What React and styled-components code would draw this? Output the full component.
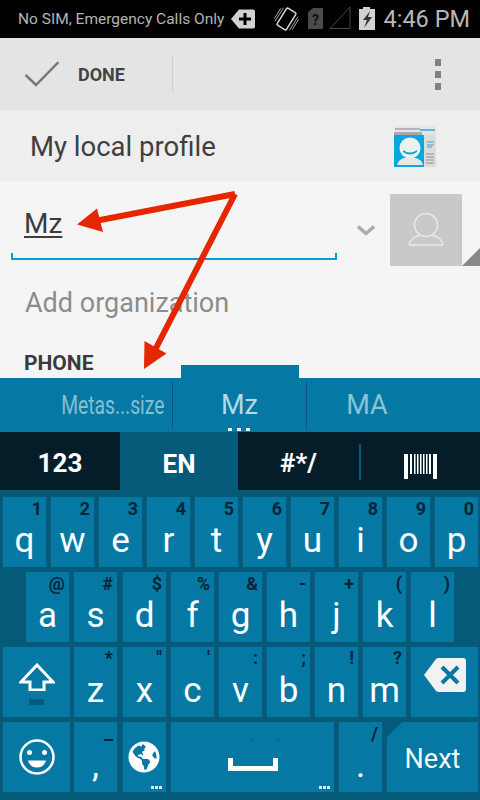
import React from "react";
import styled, {createGlobalStyle} from "styled-components";
import {FaGlobeAmericas} from "react-icons/fa";

const GlobalStyle = createGlobalStyle`
  html, body {
    margin: 0;
    padding: 0;
    background: #000;
  }

  body {
    font-family: Roboto, "Liberation Sans", sans-serif;
  }
`;

const Screen = styled.div`
  position: relative;
  width: 480px;
  height: 800px;
  overflow: hidden;
  display: flex;
  flex-direction: column;
`;

const StatusBar = styled.div`
  height: 38px;
  background: #000;
  color: #b4b4b4;
  display: flex;
  align-items: center;
  padding: 0 10px 0 18px;
`;

const StatusText = styled.span`
  font-size: 15.5px;
  width: 211px;
  flex: none;
  white-space: nowrap;
`;

const StatusIcons = styled.div`
  display: flex;
  align-items: center;
  flex: none;
  height: 38px;
`;

const Clock = styled.span`
  margin-left: auto;
  font-size: 23.5px;
  color: #b8b8b8;
  white-space: nowrap;
`;

const ActionBar = styled.div`
  height: 72px;
  background: #e4e4e4;
  display: flex;
  align-items: center;
  padding-left: 25px;
`;

const DoneLabel = styled.span`
  margin-left: 19px;
  font-size: 18px;
  font-weight: 700;
  color: #444;
`;

const BarDivider = styled.div`
  width: 1px;
  height: 36px;
  margin-left: 47px;
  background: #cfcfcf;
`;

const OverflowMenu = styled.div`
  margin-left: auto;
  margin-right: 39px;
  display: flex;
  flex-direction: column;
  gap: 5px;

  i {
    display: block;
    width: 6px;
    height: 7px;
    background: #808080;
  }
`;

const ProfileHeader = styled.div`
  height: 72px;
  background: #eeeeee;
  display: flex;
  align-items: center;
  justify-content: space-between;
  padding: 0 43px 0 30px;
  font-size: 27.5px;
  color: #3f3f3f;
`;

const Form = styled.div`
  height: 196px;
  background: #f5f5f5;
  overflow: hidden;
`;

const NameRow = styled.div`
  display: flex;
  padding: 12px 0 0 11px;
  height: 72px;
`;

const NameField = styled.div`
  width: 326px;
  height: 66px;
  box-sizing: border-box;
  border: 2px solid #0f9bcf;
  border-top: 0;
  border-image: linear-gradient(to bottom, transparent 0 60px, #0f9bcf 60px) 1;
  padding: 13px 0 0 11px;
  font-size: 28px;
  color: #3c3c3c;

  u {
    text-underline-offset: 3px;
    text-decoration-thickness: 2px;
  }
`;

const Chevron = styled.svg`
  margin: 31px 0 0 20px;
`;

const Avatar = styled.div`
  width: 72px;
  height: 72px;
  margin-left: 15px;
  background: #c9c9c9;
  display: flex;
  align-items: center;
  justify-content: center;
`;

const CornerMark = styled.div`
  width: 18px;
  height: 18px;
  margin-top: 54px;
  background: #888;
  clip-path: polygon(100% 0, 100% 100%, 0 100%);
`;

const OrgField = styled.div`
  padding: 22px 0 0 25px;
  font-size: 27px;
  line-height: 30px;
  color: #8c8c8c;
`;

const SectionTitle = styled.div`
  padding: 33px 0 0 24px;
  font-size: 21px;
  line-height: 24px;
  font-weight: 700;
  color: #3a3a3a;
`;

const CandidateBar = styled.div`
  position: relative;
  height: 54px;
  background: #0578a3;
  display: flex;
  align-items: center;

  &::before {
    content: "";
    position: absolute;
    left: 181px;
    top: -13px;
    width: 118px;
    height: 13px;
    background: #0578a3;
  }
`;

const Candidate = styled.div`
  width: ${(p) => p.$width}px;
  height: 47px;
  box-sizing: border-box;
  display: flex;
  align-items: center;
  justify-content: ${(p) => p.$align || "center"};
  font-size: 27px;
  color: ${(p) => (p.$selected ? "#b5d9e6" : "#8cc3d7")};
  border-right: ${(p) => (p.$split ? "1px solid #045a78" : "0")};
  position: relative;
`;

const SquishedText = styled.span`
  font-size: 26px;
  display: inline-block;
  transform: scaleX(0.74);
  transform-origin: right center;
  margin-right: 8px;
  white-space: nowrap;
  color: #85bfd4;
`;

const MoreDots = styled.div`
  position: absolute;
  bottom: -2px;
  left: ${(p) => p.$left}px;
  display: flex;
  gap: 5px;

  i {
    display: block;
    width: 4px;
    height: 3px;
    background: #e6f2f6;
  }
`;

const ModeRow = styled.div`
  height: 60px;
  background: #051d29;
  display: flex;
  align-items: stretch;
  margin-bottom: -2px;
`;

const ModeTab = styled.div`
  width: ${(p) => p.$width}px;
  height: ${(p) => (p.$active ? 60 : 58)}px;
  background: ${(p) => (p.$active ? "#045a78" : "transparent")};
  color: #fff;
  font-size: 26px;
  font-weight: 700;
  display: flex;
  align-items: center;
  justify-content: center;
  padding-top: 3px;
  box-sizing: border-box;
`;

const ModeDivider = styled.div`
  width: 2px;
  height: 36px;
  margin-top: 12px;
  background: #045a78;
`;

const BarcodeWrap = styled.div`
  flex: 1;
  display: flex;
  align-items: flex-start;
  justify-content: center;
  padding-top: 22px;
`;

const Keyboard = styled.div`
  flex: 1;
  background: #045a78;
  padding: 7px 2px 8px 3px;
  display: flex;
  flex-direction: column;
  gap: 5px;
`;

const KeyRow = styled.div`
  display: flex;
  gap: 5px;
  padding-left: ${(p) => p.$indent || 0}px;
`;

const Key = styled.div`
  position: relative;
  flex: none;
  width: ${(p) => p.$width || 43}px;
  height: 70px;
  margin-left: ${(p) => p.$nudge || 0}px;
  background: #0578a3;
  display: flex;
  align-items: center;
  justify-content: center;
  clip-path: ${(p) => (p.$notch ? "polygon(15px 0, 100% 0, 100% 100%, 0 100%, 0 15px)" : "none")};
`;

const Letter = styled.span`
  color: #fff;
  font-size: 35px;
  line-height: 40px;
  margin-top: 17px;
`;

const Hint = styled.span`
  position: absolute;
  right: ${(p) => p.$right ?? 4}px;
  top: ${(p) => p.$top ?? 0}px;
  color: #052536;
  font-size: 18px;
  line-height: 24px;
  font-weight: 700;
`;

const NextLabel = styled.span`
  color: #f2f8fa;
  font-size: 27px;
  margin-top: 4px;
`;

const CornerDots = styled.div`
  position: absolute;
  right: 4px;
  bottom: 3px;
  display: flex;
  gap: 1px;

  i {
    display: block;
    width: 3px;
    height: 3px;
    background: #d8ebf2;
  }
`;

const SpaceMarks = styled.div`
  position: absolute;
  top: 18px;
  left: 80px;
  display: flex;
  gap: 22px;

  i {
    display: block;
    width: 3px;
    height: 1px;
    background: #045a78;
  }
`;

const ShiftBar = styled.div`
  position: absolute;
  left: 26px;
  top: 52px;
  width: 15px;
  height: 6px;
  background: #045a78;
`;

const ArrowLayer = styled.svg`
  position: absolute;
  left: 0;
  top: 0;
  pointer-events: none;
`;

const topRow = [
  ["q", "1"], ["w", "2"], ["e", "3"], ["r", "4"], ["t", "5"],
  ["y", "6"], ["u", "7"], ["i", "8"], ["o", "9"], ["p", "0"],
];

const homeRow = [
  ["a", "@", 0], ["s", "#", 0], ["d", "$", 1], ["f", "%", 0], ["g", "&", 0],
  ["h", "-", 0], ["j", "+", 0], ["k", "(", 0], ["l", ")", 0],
];

const lowerRow = [
  ["z", "*", -1], ["x", "\"", 1], ["c", "'", 0], ["v", ":", 0],
  ["b", ";", 0], ["n", "!", 0], ["m", "?", 0],
];

const Dots = () => (
  <>
    <i />
    <i />
    <i />
  </>
);

const NotificationIcons = () => (
  <svg width="146" height="38" viewBox="0 0 146 38">
    <path d="M2 19 L10 9.500 H24 Q26 9.500 26 11.500 V26.500 Q26 28.500 24 28.500 H10 Z" fill="#d2d2d2" />
    <path d="M10 17.500 h4.500 v-4.500 h3 v4.500 h4.500 v3 h-4.500 v4.500 h-3 v-4.500 h-4.500 z" fill="#000" />
    <g transform="rotate(32 57.500 19)" fill="none" stroke="#d8d8d8">
      <rect x="52" y="9" width="11" height="20" rx="1.500" strokeWidth="1.500" />
      <path d="M49 11 v16 M47 13 v12 M66 11 v16 M68 13 v12" strokeWidth="0.700" />
    </g>
    <path d="M79 12 L84 8 H94 V29 H79 Z" fill="#4a4a4a" />
    <text x="86.500" y="25" fontSize="14" fontWeight="700" textAnchor="middle" fill="#101010" fontFamily="Roboto, sans-serif">?</text>
    <path d="M101 28.500 L121 7 V28.500 Z" fill="none" stroke="#4a4a4a" strokeWidth="1" />
    <path d="M130 9 H134 V7 H141 V9 H146 V30 H130 Z" fill="#d2d2d2" />
    <path d="M141 11 L134 20 H138 L135 28 L143 17 H139 Z" fill="#333" />
  </svg>
);

const ContactsIcon = () => (
  <svg width="44" height="44" viewBox="0 0 44 44">
    <rect x="1" y="2" width="42" height="10" fill="#e6e6e6" />
    <rect x="2" y="4" width="25" height="2" fill="#b4b4b4" />
    <rect x="27" y="5" width="15" height="2" fill="#4dbfe2" />
    <rect x="1" y="8" width="28" height="3" fill="#aaa" />
    <rect x="1" y="11" width="30" height="32" fill="#05a9dc" />
    <rect x="31" y="11" width="12" height="32" fill="#dedcd8" />
    <path d="M34 18 h7 M34 21 h7 M34 23 h5" stroke="#3aa8d0" strokeWidth="1" />
    <path d="M33 30 h8 M33 33 h8 M33 36 h8 M33 39 h8" stroke="#a8a8a8" strokeWidth="1.500" />
    <circle cx="17" cy="24" r="10.500" fill="#f0f0ee" />
    <path d="M10 26 Q17 31 24 26 V28 Q17 33 10 28 Z" fill="#05a9dc" />
    <path d="M4 41 Q5 35 13 33.500 H21 Q29 35 30 41 Z" fill="#e8e8e6" />
  </svg>
);

const App = () => (
  <>
    <GlobalStyle />
    <Screen>
      <StatusBar>
        <StatusText>No SIM, Emergency Calls Only</StatusText>
        <StatusIcons>
          <NotificationIcons />
        </StatusIcons>
        <Clock>4:46 PM</Clock>
      </StatusBar>

      <ActionBar>
        <svg width="34" height="26" viewBox="0 0 34 26">
          <path d="M0.500 14 L11 24 L33.500 1" fill="none" stroke="#777" strokeWidth="2.500" />
        </svg>
        <DoneLabel>DONE</DoneLabel>
        <BarDivider />
        <OverflowMenu>
          <Dots />
        </OverflowMenu>
      </ActionBar>

      <ProfileHeader>
        <span>My local profile</span>
        <ContactsIcon />
      </ProfileHeader>

      <Form>
        <NameRow>
          <NameField>
            <u>Mz</u>
          </NameField>
          <Chevron width="18" height="11" viewBox="0 0 18 11">
            <path d="M1 1.500 L9 8.500 L17 1.500" fill="none" stroke="#aaa" strokeWidth="3.500" />
          </Chevron>
          <Avatar>
            <svg width="36" height="36" viewBox="0 0 36 36">
              <circle cx="18" cy="13" r="11.500" fill="none" stroke="#e9e9e9" strokeWidth="1.500" />
              <path d="M1 33 Q2 26 12 23 M35 33 Q34 26 24 23 M1 33 H35" fill="none" stroke="#e9e9e9" strokeWidth="1.500" />
            </svg>
          </Avatar>
          <CornerMark />
        </NameRow>
        <OrgField>Add organization</OrgField>
        <SectionTitle>PHONE</SectionTitle>
      </Form>

      <CandidateBar>
        <Candidate $width={173} $align="flex-end" $split>
          <SquishedText>Metas...size</SquishedText>
        </Candidate>
        <Candidate $width={134} $selected $split>
          Mz
          <MoreDots $left={55}>
            <Dots />
          </MoreDots>
        </Candidate>
        <Candidate $width={120}>MA</Candidate>
      </CandidateBar>

      <ModeRow>
        <ModeTab $width={120}>123</ModeTab>
        <ModeTab $width={118} $active>EN</ModeTab>
        <ModeTab $width={121}>#*/</ModeTab>
        <ModeDivider />
        <BarcodeWrap>
          <svg width="33" height="25" viewBox="0 0 33 25" fill="#fff">
            <rect x="0" y="0" width="4" height="25" />
            <rect x="6" y="0" width="2" height="20" />
            <rect x="10" y="0" width="1.500" height="20" />
            <rect x="13" y="0" width="1.500" height="20" />
            <rect x="16" y="0" width="1.500" height="20" />
            <rect x="19" y="0" width="1.500" height="20" />
            <rect x="22" y="0" width="1.500" height="20" />
            <rect x="25" y="0" width="2" height="20" />
            <rect x="29" y="0" width="4" height="25" />
          </svg>
        </BarcodeWrap>
      </ModeRow>

      <Keyboard>
        <KeyRow>
          {topRow.map(([letter, hint]) => (
            <Key key={letter}>
              <Letter>{letter}</Letter>
              <Hint>{hint}</Hint>
            </Key>
          ))}
        </KeyRow>

        <KeyRow $indent={23}>
          {homeRow.map(([letter, hint, nudge]) => (
            <Key key={letter} $nudge={nudge}>
              <Letter>{letter}</Letter>
              <Hint>{hint}</Hint>
            </Key>
          ))}
        </KeyRow>

        <KeyRow>
          <Key $width={67}>
            <svg width="36" height="28" viewBox="0 0 36 28" style={{marginTop: -10}}>
              <path d="M18 2 L34 19 H25 V27 H11 V19 H2 Z" fill="none" stroke="#fff" strokeWidth="3" />
            </svg>
            <ShiftBar />
          </Key>
          {lowerRow.map(([letter, hint, nudge]) => (
            <Key key={letter} $nudge={nudge}>
              <Letter>{letter}</Letter>
              <Hint $top={-1}>{hint}</Hint>
            </Key>
          ))}
          <Key $width={67}>
            <svg width="42" height="34" viewBox="0 0 42 34" style={{marginTop: -14}}>
              <path d="M0 17 L12 1 Q13 0 15 0 H39 Q42 0 42 3 V31 Q42 34 39 34 H15 Q13 34 12 33 Z" fill="#f2f2f2" />
              <path d="M18 9 L34 25 M34 9 L18 25" stroke="#0578a3" strokeWidth="4" />
            </svg>
          </Key>
        </KeyRow>

        <KeyRow>
          <Key $width={67}>
            <svg width="36" height="36" viewBox="0 0 36 36">
              <circle cx="18" cy="18" r="16.500" fill="none" stroke="#fff" strokeWidth="2.500" />
              <circle cx="10.500" cy="13.500" r="2.500" fill="#fff" />
              <circle cx="25.500" cy="13.500" r="2.500" fill="#fff" />
              <path d="M9 21.500 H27 Q25 28.500 18 28.500 Q11 28.500 9 21.500 Z" fill="#fff" />
            </svg>
          </Key>
          <Key $nudge={-1}>
            <Letter>,</Letter>
            <Hint $right={3} $top={6}>–</Hint>
          </Key>
          <Key $nudge={1}>
            <FaGlobeAmericas size={32} color="#fff" style={{marginTop: -1, marginRight: 2}} />
            <CornerDots>
              <Dots />
            </CornerDots>
          </Key>
          <Key $width={163}>
            <SpaceMarks>
              <i />
              <i />
            </SpaceMarks>
            <svg width="50" height="13" viewBox="0 0 50 13" style={{marginLeft: 1, marginTop: 15}}>
              <path d="M2.500 0 V10.500 H47.500 V0" fill="none" stroke="#fff" strokeWidth="5" />
            </svg>
            <CornerDots>
              <Dots />
            </CornerDots>
          </Key>
          <Key>
            <Letter>.</Letter>
            <Hint $right={4}>/</Hint>
          </Key>
          <Key $width={91} $notch>
            <NextLabel>Next</NextLabel>
          </Key>
        </KeyRow>
      </Keyboard>

      <ArrowLayer width="480" height="800" viewBox="0 0 480 800">
        <path d="M235 194 L95 221 M235 194 L155 350" fill="none" stroke="#e62600" strokeWidth="6" />
        <path d="M77 224.500 L97 208.500 L103 232 Z" fill="#e62600" />
        <path d="M144 369 L144.500 341 L166.500 353.500 Z" fill="#e62600" />
      </ArrowLayer>
    </Screen>
  </>
);

export default App;
